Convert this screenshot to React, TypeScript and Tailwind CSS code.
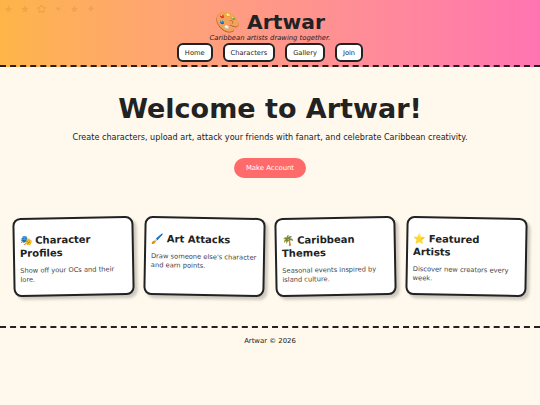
const NAV_LINKS = ['Home', 'Characters', 'Gallery', 'Join'];
const DOODLES = ['★', '★', '✿', '☀', '★', '✦'];

const FEATURES = [
  { emoji: '🎭', title: 'Character Profiles', text: 'Show off your OCs and their lore.', tilt: 'rotate-[-1deg]' },
  { emoji: '🖌️', title: 'Art Attacks', text: "Draw someone else's character and earn points.", tilt: 'rotate-[1deg]' },
  { emoji: '🌴', title: 'Caribbean Themes', text: 'Seasonal events inspired by island culture.', tilt: 'rotate-[-1deg]' },
  { emoji: '⭐', title: 'Featured Artists', text: 'Discover new creators every week.', tilt: 'rotate-[1deg]' },
];

export default function App() {
  return (
    <div className="min-h-[405px] bg-[#fff8ec] text-[#222] font-['Verdana','DejaVu_Sans',sans-serif]">
      {/* Header */}
      <header className="relative h-[67px] border-b-2 border-dashed border-[#222] bg-gradient-to-r from-[#feb547] to-[#ff74b1] text-center">
        <div className="absolute left-[3px] top-[1px] flex gap-[6px] text-[12px] leading-4 text-black/[0.07]">
          {DOODLES.map((d, i) => (
            <span key={i} className="w-[10.5px] text-center">{d}</span>
          ))}
        </div>
        <h1 className="pt-[10px] text-[20.3px] font-bold leading-[24px]">🎨 Artwar</h1>
        <p className="text-[6.8px] italic leading-[9px]">Caribbean artists drawing together.</p>
        <nav className="flex justify-center gap-[10px]">
          {NAV_LINKS.map((link) => (
            <a
              key={link}
              href="#"
              className="rounded-[6px] border-2 border-[#222] bg-white px-[6px] py-[1.5px] text-[6.7px] leading-[12px]"
            >
              {link}
            </a>
          ))}
        </nav>
      </header>

      {/* Hero */}
      <section className="px-4 pt-[26px] text-center">
        <h2 className="text-[27px] font-bold leading-[32px]">Welcome to Artwar!</h2>
        <p className="mt-[7px] text-[8.1px] leading-[10px]">
          Create characters, upload art, attack your friends with fanart, and celebrate Caribbean creativity.
        </p>
        <button className="mt-[16px] rounded-full bg-[#ff6b6b] px-[12px] py-[5px] text-[6.9px] leading-[10px] text-white">
          Make Account
        </button>
      </section>

      {/* Feature cards */}
      <section className="mt-[39px] grid grid-cols-4 gap-[10px] px-[13px]">
        {FEATURES.map((f) => (
          <div
            key={f.title}
            className={`h-[79px] rounded-[8px] border-2 border-[#222] bg-white px-[5px] pt-[14px] shadow-[3px_3px_3px_rgba(0,0,0,0.2)] ${f.tilt}`}
          >
            <h3 className="text-[10px] font-bold leading-[13px]">
              {f.emoji} {f.title}
            </h3>
            <p className="mt-[7px] text-[6.7px] leading-[9px] text-[#444]">{f.text}</p>
          </div>
        ))}
      </section>

      {/* Footer */}
      <footer className="mt-[30px] border-t-2 border-dashed border-[#222] pt-[8px] text-center text-[6.9px] leading-[10px]">
        Artwar © 2026
      </footer>
    </div>
  );
}
